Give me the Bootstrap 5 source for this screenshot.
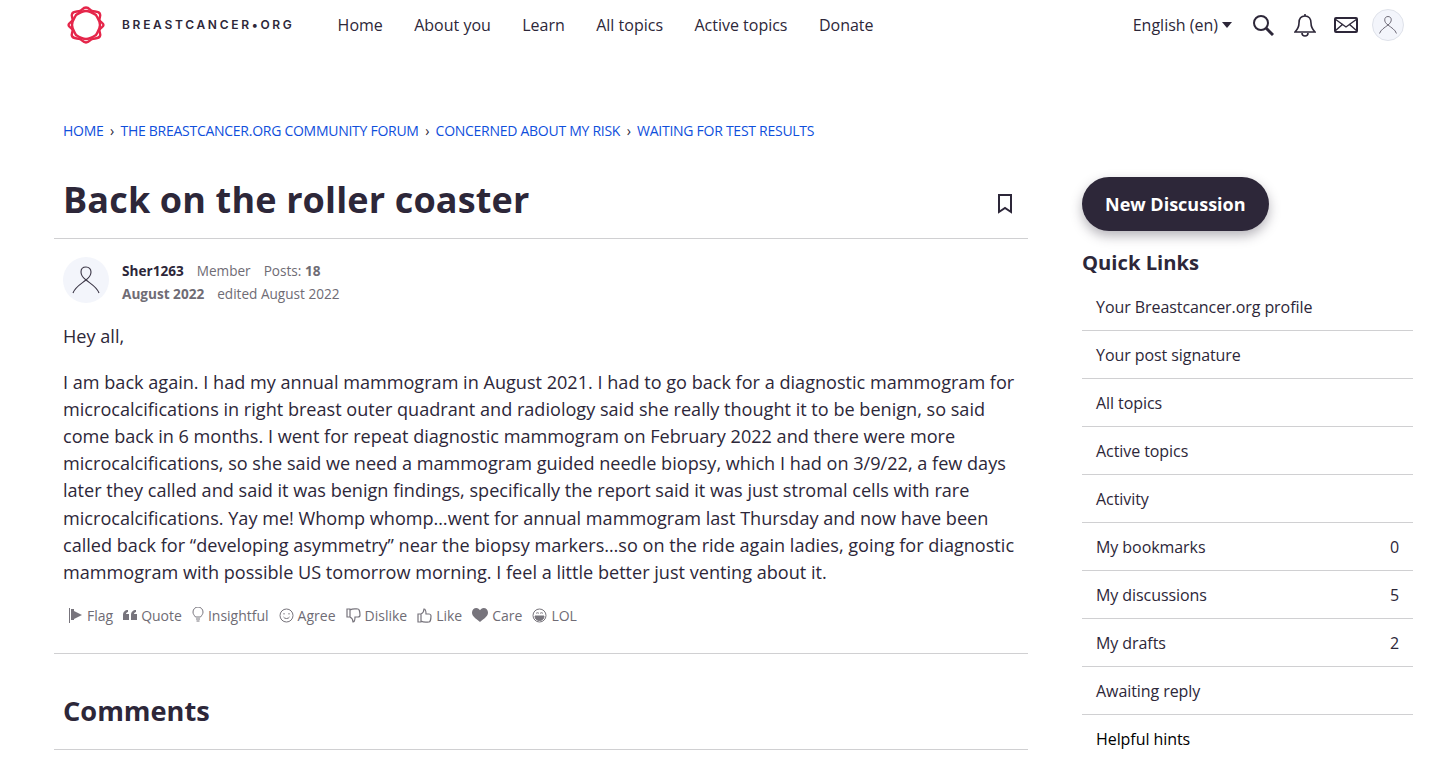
<!DOCTYPE html>
<html lang="en">
<head>
    <meta charset="UTF-8">
    <meta name="viewport" content="width=device-width, initial-scale=1.0">
    <title>Back on the roller coaster</title>
    <link href="https://cdn.jsdelivr.net/npm/bootstrap@5.3.0/dist/css/bootstrap.min.css" rel="stylesheet">
    <style>
        html, body { height: 761px; overflow: hidden; }
        body { font-family: "Open Sans", sans-serif; color: #2d2739; background: #fff; font-size: 16px; }
        a { color: inherit; text-decoration: none; }

        .top-bar { height: 50px; padding-left: 67px; padding-right: 47px; }
        .logo-text { font-family: Inter, sans-serif; font-weight: 600; font-size: 12px; letter-spacing: 2.7px; margin-left: 17px; white-space: nowrap; }
        .main-links { margin-left: 43px; gap: 31.4px; }
        .top-icons { gap: 20px; }
        .lang-caret { display: inline-block; border-left: 5px solid transparent; border-right: 5px solid transparent; border-top: 6px solid #2d2739; margin-left: 4px; vertical-align: 3px; }
        .mail-icon { margin: 0 -6px 0 -2px; }

        .page-wrap { padding-left: 54px; padding-right: 38px; gap: 54px; }
        .crumbs { padding: 71px 0 0 63px; font-size: 14px; line-height: 20px; color: #0f4fdc; letter-spacing: -.27px; }
        .crumbs span { color: #2d2739; margin: 0 6.5px; }
        .main-col { width: 974px; flex: none; }
        .side-col { width: 331px; flex: none; padding-top: 36px; }

        .topic-head { height: 78px; padding: 0 15px 0 9px; border-bottom: 1px solid #d0d0d2; margin-top: 20px; }
        .topic-head h1 { font-size: 36px; font-weight: 700; margin: 0; letter-spacing: .15px; }
        .post-meta { padding: 18px 9px 0; font-size: 13.6px; color: #6f6c75; line-height: 23px; gap: 13px; }
        .meta-rows { margin-top: 2px; }
        .meta-row { gap: 13px; }
        .poster-name { color: #2d2739; }
        .user-pic { width: 46px; height: 46px; border-radius: 50%; background: #f3f5fb; flex: none; }
        .user-pic-small { width: 32px; height: 32px; border: 1px solid #dfe2ea; }
        .post-body { padding: 18px 9px 0; font-size: 18.1px; line-height: 27.1px; }
        .post-body p { margin-bottom: 19px; }
        .react-row { padding: 0 14px 27px; margin-top: 2px; font-size: 14px; color: #6f6c75; gap: 10px; border-bottom: 1px solid #d0d0d2; }
        .react-row svg { display: block; }
        .comments-head { padding: 38px 9px 20px; border-bottom: 1px solid #d0d0d2; }
        .comments-head h2 { font-size: 27.2px; font-weight: 700; margin: 0; line-height: 37px; }

        .new-btn { background: #2d2739; color: #fff; font-weight: 700; font-size: 18px; border-radius: 27px; height: 54px; padding: 0 23px; box-shadow: 0 5px 12px rgba(45,39,57,.35); border: 0; }
        .new-btn:hover { background: #2d2739; color: #fff; }
        .side-title { font-size: 20.2px; font-weight: 700; margin: 18px 0 7px; line-height: 27px; }
        .quick-item { background: none; border-color: #d0d0d2; color: #2d2739; padding: 0 14px; height: 48px; font-size: 16px; letter-spacing: -.07px; border-left: 0; border-right: 0; border-top: 0; border-radius: 0 !important; }
        .quick-last { border-bottom: 0; color: #000; }
    </style>
</head>
<body>

    <!-- top navigation -->
    <nav class="top-bar d-flex align-items-center">
        <svg width="38" height="38" viewBox="0 0 38 38" fill="none" stroke="#e5264a" stroke-width="2.400">
            <path d="M19 1.500c3 0 4 2.500 6 3.500 3 1 7 0 8 3 1 2-1 4-.5 6 .5 2 4 3 4 5s-3.500 3-4 5c-.5 2 1.500 4 .5 6-1 3-5 2-8 3-2 1-3 3.500-6 3.500s-4-2.500-6-3.500c-3-1-7 0-8-3-1-2 1-4 .5-6-.5-2-4-3-4-5s3.500-3 4-5c.5-2-1.500-4-.5-6 1-3 5-2 8-3 2-1 3-3.500 6-3.500z" />
            <path d="M9 9c3-2 6-4 10-4s7 2 10 4c1.500 3 4 6 4 10s-2.500 7-4 10c-3 2-6 4-10 4s-7-2-10-4c-1.500-3-4-6-4-10s2.500-7 4-10z" />
        </svg>
        <span class="logo-text">BREASTCANCER•ORG</span>
        <div class="main-links d-flex">
            <a href="#">Home</a>
            <a href="#">About you</a>
            <a href="#">Learn</a>
            <a href="#">All topics</a>
            <a href="#">Active topics</a>
            <a href="#">Donate</a>
        </div>
        <div class="top-icons d-flex align-items-center ms-auto">
            <span>English (en)<i class="lang-caret"></i></span>
            <svg width="22" height="22" viewBox="0 0 22 22" fill="none" stroke="#2d2739" stroke-width="2"><circle cx="9" cy="9" r="7" /><path d="M14 14l7 7" stroke-width="3" /></svg>
            <svg width="22" height="24" viewBox="0 0 22 24" fill="none" stroke="#2d2739" stroke-width="1.600"><path d="M11 3c-4 0-6 3-6 7 0 5-2 7-4 9h20c-2-2-4-4-4-9 0-4-2-7-6-7z" /><path d="M11 1v2M8 20c0 2 1 3 3 3s3-1 3-3" /></svg>
            <svg class="mail-icon" width="24" height="16" viewBox="0 0 24 16" fill="none" stroke="#2d2739" stroke-width="2"><rect x="1" y="1" width="22" height="14" rx="1" /><path d="M1 2l11 8 11-8M1 14l8-7M23 14l-8-7" stroke-width="1.400" /></svg>
            <span class="user-pic user-pic-small d-block">
                <svg width="30" height="30" viewBox="0 0 46 46" fill="none" stroke="#55505f" stroke-width="1.300"><path d="M10 36c2-6 8-9 13-13 4-3 5-6 5-8 0-3-2-5-5-5s-5 2-5 5c0 3 1 5 5 8 5 4 11 7 13 13" /></svg>
            </span>
        </div>
    </nav>

    <!-- breadcrumbs -->
    <div class="crumbs">
        <a href="#">HOME</a><span>›</span><a href="#">THE BREASTCANCER.ORG COMMUNITY FORUM</a><span>›</span><a href="#">CONCERNED ABOUT MY RISK</a><span>›</span><a href="#">WAITING FOR TEST RESULTS</a>
    </div>

    <div class="page-wrap d-flex">
        <div class="main-col">
            <div class="topic-head d-flex align-items-center justify-content-between">
                <h1>Back on the roller coaster</h1>
                <svg class="mt-2" width="16" height="20" viewBox="0 0 16 20" fill="none" stroke="#2d2739" stroke-width="2"><path d="M2 1h12v17l-6-4-6 4z" /></svg>
            </div>

            <div class="post-meta d-flex">
                <span class="user-pic d-block">
                    <svg width="46" height="46" viewBox="0 0 46 46" fill="none" stroke="#3a3545" stroke-width="1.100"><path d="M10 36c2-6 8-9 13-13 4-3 5-6 5-8 0-3-2-5-5-5s-5 2-5 5c0 3 1 5 5 8 5 4 11 7 13 13" /></svg>
                </span>
                <div class="meta-rows">
                    <div class="meta-row d-flex">
                        <b class="poster-name">Sher1263</b>
                        <span>Member</span>
                        <span>Posts: <b>18</b></span>
                    </div>
                    <div class="meta-row d-flex">
                        <b>August 2022</b>
                        <span>edited August 2022</span>
                    </div>
                </div>
            </div>

            <div class="post-body">
                <p>Hey all,</p>
                <p>I am back again. I had my annual mammogram in August 2021. I had to go back for a diagnostic mammogram for microcalcifications in right breast outer quadrant and radiology said she really thought it to be benign, so said come back in 6 months. I went for repeat diagnostic mammogram on February 2022 and there were more microcalcifications, so she said we need a mammogram guided needle biopsy, which I had on 3/9/22, a few days later they called and said it was benign findings, specifically the report said it was just stromal cells with rare microcalcifications. Yay me! Whomp whomp…went for annual mammogram last Thursday and now have been called back for “developing asymmetry” near the biopsy markers…so on the ride again ladies, going for diagnostic mammogram with possible US tomorrow morning. I feel a little better just venting about it.</p>
            </div>

            <div class="react-row d-flex align-items-center">
                <span class="d-flex align-items-center gap-1"><svg width="15" height="15" viewBox="0 0 15 15" fill="#77747c"><path d="M1 0h1v15H1zM3 1h3v2l8 4-8 4v1H3z" /></svg>Flag</span>
                <span class="d-flex align-items-center gap-1"><svg width="14" height="12" viewBox="0 0 14 12" fill="#77747c"><path d="M0 6c0-3 2-5 5-5v2C4 3 3 4 3 5h3v6H0zM8 6c0-3 2-5 5-5v2c-1 0-2 1-2 2h3v6H8z" /></svg>Quote</span>
                <span class="d-flex align-items-center gap-1"><svg width="12" height="16" viewBox="0 0 12 16" fill="none" stroke="#77747c"><path d="M3.500 10C2 8 1 7 1 5a5 5 0 0 1 10 0c0 2-1 3-2.500 5zM4 12h4M4.500 14h3" /></svg>Insightful</span>
                <span class="d-flex align-items-center gap-1"><svg width="15" height="15" viewBox="0 0 15 15" fill="none" stroke="#77747c"><circle cx="7.500" cy="7.500" r="6.500" /><path d="M4.500 9c1 2 5 2 6 0M5 5v1.500M10 5v1.500" /></svg>Agree</span>
                <span class="d-flex align-items-center gap-1"><svg width="15" height="15" viewBox="0 0 15 15" fill="none" stroke="#77747c" stroke-width="1.200"><path d="M1 1h3v8H1zM4 2c3-2 6-1 8-1 1 0 2 3 2 6 0 1-1 2-2 2H9c0 2 0 5-2 5 0-3-1-4-3-5" /></svg>Dislike</span>
                <span class="d-flex align-items-center gap-1"><svg width="15" height="15" viewBox="0 0 15 15" fill="none" stroke="#77747c" stroke-width="1.200"><path d="M1 6h3v8H1zM4 13c3 2 6 1 8 1 1 0 2-3 2-6 0-1-1-2-2-2H9c0-2 0-5-2-5 0 3-1 4-3 5" /></svg>Like</span>
                <span class="d-flex align-items-center gap-1"><svg width="16" height="14" viewBox="0 0 16 14" fill="#77747c"><path d="M8 14C3 10 0 8 0 4.500 0 2 2 0 4.300 0 6 0 7.300 1 8 2.300 8.700 1 10 0 11.700 0 14 0 16 2 16 4.500 16 8 13 10 8 14z" /></svg>Care</span>
                <span class="d-flex align-items-center gap-1"><svg width="15" height="15" viewBox="0 0 15 15" fill="none" stroke="#77747c"><circle cx="7.500" cy="7.500" r="6.500" /><path d="M3 8h9c0 3-2 4.500-4.500 4.500S3 11 3 8z" fill="#77747c" /><path d="M4 5.500c1-1 2-1 3 0M8 5.500c1-1 2-1 3 0" /></svg>LOL</span>
            </div>

            <div class="comments-head">
                <h2>Comments</h2>
            </div>
        </div>

        <aside class="side-col">
            <a href="#" class="btn new-btn d-inline-flex align-items-center">New Discussion</a>
            <div class="side-title">Quick Links</div>
            <div class="list-group">
                <a href="#" class="list-group-item quick-item d-flex align-items-center justify-content-between">Your Breastcancer.org profile</a>
                <a href="#" class="list-group-item quick-item d-flex align-items-center justify-content-between">Your post signature</a>
                <a href="#" class="list-group-item quick-item d-flex align-items-center justify-content-between">All topics</a>
                <a href="#" class="list-group-item quick-item d-flex align-items-center justify-content-between">Active topics</a>
                <a href="#" class="list-group-item quick-item d-flex align-items-center justify-content-between">Activity</a>
                <a href="#" class="list-group-item quick-item d-flex align-items-center justify-content-between"><span>My bookmarks</span><span>0</span></a>
                <a href="#" class="list-group-item quick-item d-flex align-items-center justify-content-between"><span>My discussions</span><span>5</span></a>
                <a href="#" class="list-group-item quick-item d-flex align-items-center justify-content-between"><span>My drafts</span><span>2</span></a>
                <a href="#" class="list-group-item quick-item d-flex align-items-center justify-content-between">Awaiting reply</a>
                <a href="#" class="list-group-item quick-item quick-last d-flex align-items-center justify-content-between">Helpful hints</a>
            </div>
        </aside>
    </div>

</body>
</html>
